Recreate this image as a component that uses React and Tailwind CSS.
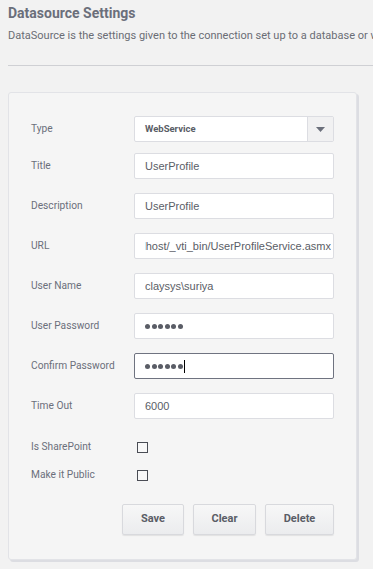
const fields = [
  { label: "Title", value: "UserProfile" },
  { label: "Description", value: "UserProfile" },
  { label: "URL", value: "http://localhost/_vti_bin/UserProfileService.asmx", scrolled: true },
  { label: "User Name", value: "claysys\\suriya" },
  { label: "User Password", password: true },
  { label: "Confirm Password", password: true, focused: true },
  { label: "Time Out", value: "6000" },
];

const Dots = () => (
  <div className="flex items-center gap-[1.6px]">
    {[0, 1, 2, 3, 4, 5].map((i) => (
      <span key={i} className="w-[5px] h-[5px] rounded-full bg-[#5a5d66]" />
    ))}
  </div>
);

const Field = ({ label, value, scrolled, password, focused }) => (
  <div className="flex items-center h-[26px]">
    <label className="w-[103px] shrink-0 text-[10.2px] text-[#6b6f7b]">{label}</label>
    <div
      className={`flex-1 h-[26px] bg-white rounded-[2px] border flex items-center overflow-hidden pl-[10px] ${
        focused ? "border-[#6f7380]" : "border-[#dcdde2]"
      } ${scrolled ? "pr-[2px]" : "pr-[10px]"}`}
    >
      {password ? (
        <div className="flex items-center">
          <Dots />
          {focused && <span className="ml-[1px] w-px h-[13px] bg-black" />}
        </div>
      ) : (
        <div className={`flex-1 flex overflow-hidden ${scrolled ? "justify-end" : ""}`}>
          <span className="whitespace-nowrap text-[11px] text-[#5a5d66] font-['Liberation_Sans',Arial,sans-serif]">
            {value}
          </span>
        </div>
      )}
    </div>
  </div>
);

const CheckRow = ({ label }) => (
  <div className="flex items-center h-[14px]">
    <span className="w-[103px] shrink-0 text-[10.2px] text-[#6b6f7b]">{label}</span>
    <span className="ml-[3px] w-[11px] h-[11px] border border-[#4a4d55] bg-[#f8f8f8]" />
  </div>
);

const Button = ({ children, w }) => (
  <button
    className={`${w} h-[31px] rounded-[2px] border border-[#d8d9dd] bg-gradient-to-b from-[#f7f7f7] to-[#ebecee] text-[11px] font-bold text-[#5a5d66] shadow-[0_1px_1px_rgba(0,0,0,0.08)]`}
  >
    {children}
  </button>
);

export default function App() {
  return (
    <div className="min-h-[569px] w-[373px] overflow-hidden bg-[#f2f2f2] font-['Roboto',sans-serif] px-[8px]">
      <h1 className="pt-[3px] text-[14px] leading-[20px] font-bold text-[#6b6f7b]">Datasource Settings</h1>
      <p className="mt-[5px] text-[11px] leading-[16px] text-[#6a6d75] whitespace-nowrap">
        DataSource is the settings given to the connection set up to a database or web service
      </p>
      <div className="mt-[21px] -mr-[8px] border-t border-[#cfd0d4]" />

      <div className="mt-[26px] w-[349px] bg-[#f5f5f5] border border-[#e2e3e7] rounded-[3px] shadow-[2px_2px_0_#dcdde2] pt-[23px] pb-[24px] pl-[22px] pr-[22px]">
        <div className="flex items-center h-[26px]">
          <label className="w-[103px] shrink-0 text-[10.2px] text-[#6b6f7b]">Type</label>
          <div className="flex-1 h-[26px] flex bg-white border border-[#dcdde2] rounded-[2px]">
            <div className="flex-1 flex items-center px-[10px] text-[9.5px] font-bold text-[#5a5d66]">WebService</div>
            <div className="w-[26px] border-l border-[#dcdde2] bg-[#f1f1f2] flex items-center justify-center">
              <svg width="9" height="5" viewBox="0 0 9 5">
                <path d="M0 0h9L4.5 5z" fill="#6b6f7b" />
              </svg>
            </div>
          </div>
        </div>
        <div className="mt-[11px] flex flex-col gap-[14px]">
          {fields.map((f) => (
            <Field key={f.label} {...f} />
          ))}
        </div>

        <div className="mt-[21px] flex flex-col gap-[14px]">
          <CheckRow label="Is SharePoint" />
          <CheckRow label="Make it Public" />
        </div>

        <div className="mt-[22px] flex justify-end gap-[9px]">
          <Button w="w-[62px]">Save</Button>
          <Button w="w-[63px]">Clear</Button>
          <Button w="w-[69px]">Delete</Button>
        </div>
      </div>
    </div>
  );
}
